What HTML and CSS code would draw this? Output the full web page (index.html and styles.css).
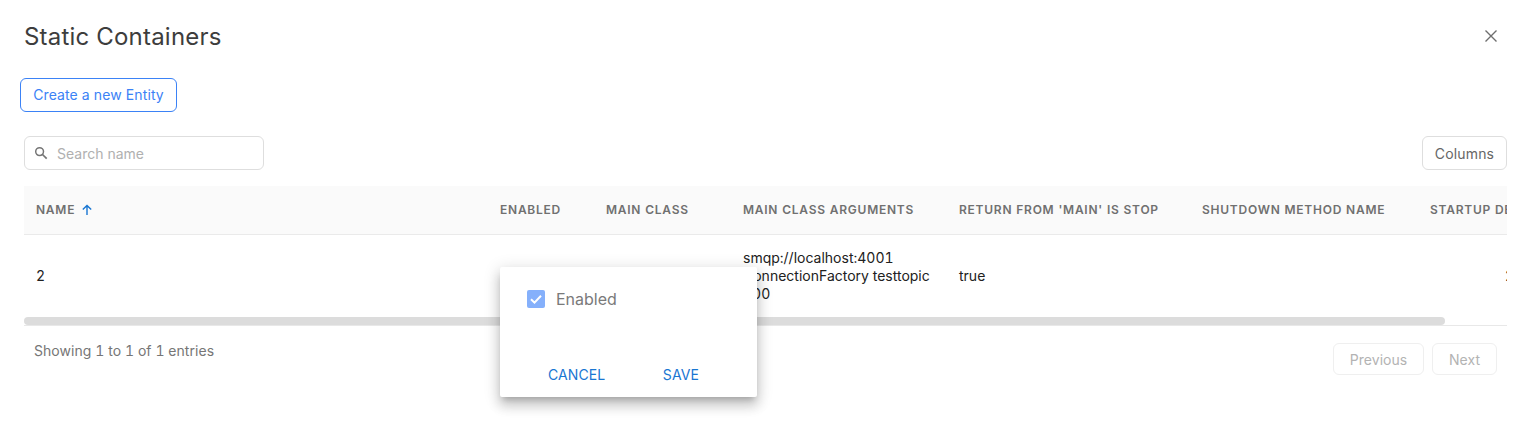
FILE: index.html
```html
<!DOCTYPE html>
<html lang="en">
<head>
    <meta charset="UTF-8">
    <title>Static Containers</title>
    <link rel="stylesheet" href="styles.css">
</head>
<body>

    <div class="dialog">
        <div class="dialog-header">
            <h2>Static Containers</h2>
            <button class="close-btn" aria-label="Close">
                <svg width="14" height="14" viewBox="0 0 14 14"><path d="M1.5 1.5L12.5 12.5M12.5 1.5L1.5 12.5" fill="none" stroke="#6e6e6e" stroke-width="1.4"/></svg>
            </button>
        </div>

        <button class="create-btn">Create a new Entity</button>

        <div class="content">
            <div class="toolbar">
                <label class="search">
                    <svg width="14" height="14" viewBox="0 0 14 14"><circle cx="5.6" cy="5.6" r="3.9" fill="none" stroke="#757575" stroke-width="1.5"/><path d="M8.5 8.5L12.7 12.7" stroke="#757575" stroke-width="1.7"/></svg>
                    <input type="text" placeholder="Search name">
                </label>
                <button class="plain-btn">Columns</button>
            </div>

            <div class="table-wrap">
                <table>
                    <colgroup>
                        <col class="col-name">
                        <col class="col-enabled">
                        <col class="col-class">
                        <col class="col-args">
                        <col class="col-return">
                        <col class="col-shutdown">
                        <col class="col-startup">
                    </colgroup>
                    <thead>
                        <tr>
                            <th>Name
                                <svg class="sort" width="12" height="12" viewBox="0 0 12 12"><path d="M6 11V1.5M1.8 5.6L6 1.4L10.2 5.6" fill="none" stroke="#1976d2" stroke-width="1.4"/></svg>
                            </th>
                            <th>Enabled</th>
                            <th>Main Class</th>
                            <th>Main Class Arguments</th>
                            <th>Return from 'main' is stop</th>
                            <th>Shutdown method name</th>
                            <th>Startup delay</th>
                        </tr>
                    </thead>
                    <tbody>
                        <tr>
                            <td>2</td>
                            <td></td>
                            <td></td>
                            <td>smqp://localhost:4001 ConnectionFactory testtopic 100</td>
                            <td>true</td>
                            <td></td>
                            <td class="num">2</td>
                        </tr>
                    </tbody>
                </table>
                <div class="scrollbar"></div>
            </div>

            <div class="table-footer">
                <span class="entries">Showing 1 to 1 of 1 entries</span>
                <div class="pager">
                    <button class="plain-btn disabled">Previous</button>
                    <button class="plain-btn disabled">Next</button>
                </div>
            </div>
        </div>

        <div class="popup">
            <label class="check-row">
                <span class="checkbox">
                    <svg width="18" height="18" viewBox="0 0 18 18"><path d="M4 9.2L7.5 12.6L14 5.8" fill="none" stroke="#fff" stroke-width="2"/></svg>
                </span>
                Enabled
            </label>
            <div class="popup-actions">
                <button class="text-btn">Cancel</button>
                <button class="text-btn">Save</button>
            </div>
        </div>
    </div>

</body>
</html>
```

FILE: styles.css
```css
html, body {
    margin: 0;
    padding: 0;
    background-color: #fff;
}
body {
    font-family: Inter, "Liberation Sans", sans-serif;
    font-size: 14px;
    font-variant-numeric: tabular-nums;
    color: #212121;
}
button {
    font-family: inherit;
    background: none;
    cursor: pointer;
}
.dialog {
    position: relative;
    height: 433px;
    box-sizing: border-box;
    padding: 0 25px 0 20px;
    overflow: hidden;
}
.dialog-header {
    display: flex;
    justify-content: space-between;
    align-items: center;
    height: 72px;
    padding-left: 4px;
}
.dialog-header h2 {
    margin: 0;
    font-size: 24px;
    font-weight: 400;
    letter-spacing: 0.22px;
    color: #3d3d3d;
}
.close-btn {
    display: flex;
    border: none;
    padding: 0;
    margin-right: 9px;
}
.create-btn {
    display: block;
    height: 34px;
    width: 157px;
    margin-top: 6px;
    padding: 0 0 1px;
    font-size: 14px;
    font-weight: 400;
    letter-spacing: 0.1px;
    color: #3b82f6;
    border: 1px solid #3b82f6;
    border-radius: 6px;
    white-space: nowrap;
}
.content {
    margin-top: 24px;
    padding-left: 4px;
}
.toolbar {
    display: flex;
    justify-content: space-between;
    height: 34px;
}
.search {
    display: flex;
    align-items: center;
    gap: 9px;
    width: 240px;
    box-sizing: border-box;
    padding-left: 9px;
    border: 1px solid #dedede;
    border-radius: 6px;
}
.search input {
    flex: 1;
    min-width: 0;
    border: none;
    outline: none;
    padding: 0;
    font-family: inherit;
    font-size: 14px;
}
.search input::placeholder {
    color: #b0b0b0;
}
.plain-btn {
    padding: 0;
    width: 85px;
    font-size: 14px;
    font-weight: 400;
    letter-spacing: 0.15px;
    color: #666;
    border: 1px solid #dedede;
    border-radius: 6px;
}
.table-wrap {
    position: relative;
    margin-top: 16px;
    height: 139px;
    overflow: hidden;
    border-bottom: 1px solid #e8e8e8;
}
table {
    table-layout: fixed;
    width: 1502px;
    border-collapse: collapse;
}
.col-name { width: 464px; }
.col-enabled { width: 106px; }
.col-class { width: 137px; }
.col-args { width: 216px; }
.col-return { width: 243px; }
.col-shutdown { width: 228px; }
.col-startup { width: 108px; }
th {
    height: 48px;
    padding: 0 12px;
    box-sizing: border-box;
    background-color: #fafafa;
    border-bottom: 1px solid #eaeaea;
    text-align: left;
    font-size: 12px;
    font-weight: 600;
    letter-spacing: 0.75px;
    text-transform: uppercase;
    white-space: nowrap;
    color: #707070;
}
.sort {
    vertical-align: -2px;
    margin-left: 2px;
}
td {
    height: 82px;
    padding: 2px 12px 0;
    box-sizing: border-box;
    font-size: 14px;
    line-height: 18px;
    color: #212121;
    vertical-align: middle;
}
td.num {
    text-align: right;
}
.scrollbar {
    position: absolute;
    left: 0;
    bottom: 0;
    width: 1421px;
    height: 8px;
    border-radius: 4px;
    background-color: #dcdcdc;
}
.table-footer {
    display: flex;
    justify-content: space-between;
    margin-top: 17px;
    padding-left: 10px;
    padding-right: 10px;
}
.entries {
    font-size: 14px;
    line-height: 16px;
    letter-spacing: 0.05px;
    color: #767676;
}
.pager {
    display: flex;
    gap: 8px;
    height: 32px;
}
.pager .plain-btn {
    width: 91px;
}
.pager .plain-btn:last-child {
    width: 65px;
}
.plain-btn.disabled {
    color: #b3b3b3;
    letter-spacing: 0.05px;
    border-color: #efefef;
}
.popup {
    position: absolute;
    left: 500px;
    top: 267px;
    width: 257px;
    height: 130px;
    background-color: #fff;
    border-radius: 2px;
    box-shadow: 0 5px 6px -3px rgba(0, 0, 0, 0.2), 0 9px 12px 1px rgba(0, 0, 0, 0.14), 0 3px 16px 2px rgba(0, 0, 0, 0.12);
}
.check-row {
    display: flex;
    align-items: center;
    gap: 11px;
    padding: 22px 0 0 27px;
    font-size: 16px;
    color: #7a7a7a;
}
.checkbox {
    display: flex;
    width: 18px;
    height: 18px;
    border-radius: 2px;
    background-color: #85b0fb;
}
.popup-actions {
    display: flex;
    margin-top: 57px;
    padding-left: 48px;
    gap: 57.5px;
}
.text-btn {
    padding: 0;
    border: none;
    font-size: 14px;
    font-weight: 400;
    letter-spacing: 0.1px;
    line-height: 18px;
    text-transform: uppercase;
    color: #1976d2;
}
```
